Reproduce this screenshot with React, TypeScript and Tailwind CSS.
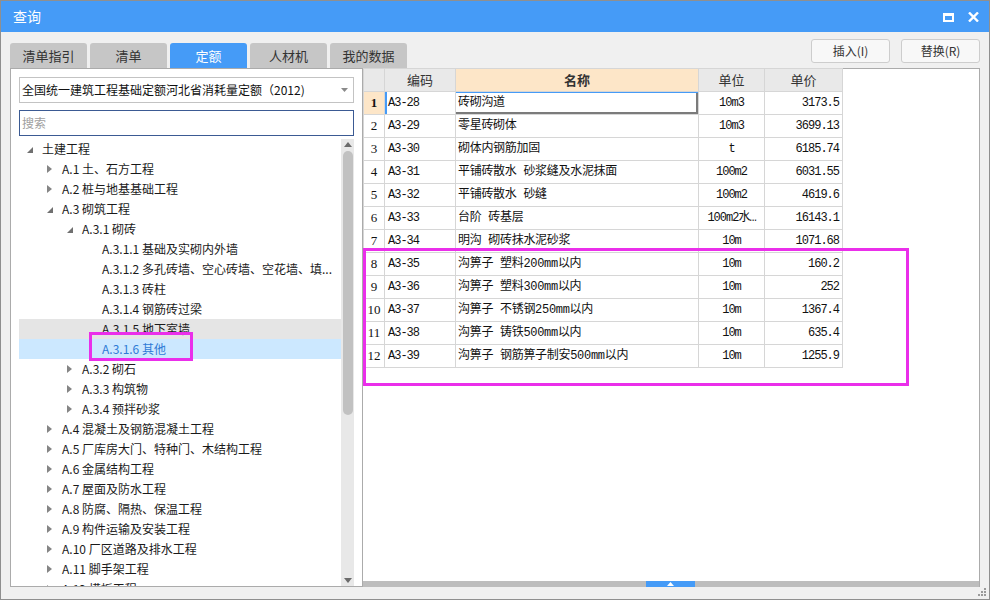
import React from 'react'

type Node = { label: string; level: number; state: 'open' | 'closed' | 'leaf'; mode?: 'hover' | 'selected' }

const tree: Node[] = [
  { label: '土建工程', level: 0, state: 'open' },
  { label: 'A.1 土、石方工程', level: 1, state: 'closed' },
  { label: 'A.2 桩与地基基础工程', level: 1, state: 'closed' },
  { label: 'A.3 砌筑工程', level: 1, state: 'open' },
  { label: 'A.3.1 砌砖', level: 2, state: 'open' },
  { label: 'A.3.1.1 基础及实砌内外墙', level: 3, state: 'leaf' },
  { label: 'A.3.1.2 多孔砖墙、空心砖墙、空花墙、填...', level: 3, state: 'leaf' },
  { label: 'A.3.1.3 砖柱', level: 3, state: 'leaf' },
  { label: 'A.3.1.4 钢筋砖过梁', level: 3, state: 'leaf' },
  { label: 'A.3.1.5 地下室墙', level: 3, state: 'leaf', mode: 'hover' },
  { label: 'A.3.1.6 其他', level: 3, state: 'leaf', mode: 'selected' },
  { label: 'A.3.2 砌石', level: 2, state: 'closed' },
  { label: 'A.3.3 构筑物', level: 2, state: 'closed' },
  { label: 'A.3.4 预拌砂浆', level: 2, state: 'closed' },
  { label: 'A.4 混凝土及钢筋混凝土工程', level: 1, state: 'closed' },
  { label: 'A.5 厂库房大门、特种门、木结构工程', level: 1, state: 'closed' },
  { label: 'A.6 金属结构工程', level: 1, state: 'closed' },
  { label: 'A.7 屋面及防水工程', level: 1, state: 'closed' },
  { label: 'A.8 防腐、隔热、保温工程', level: 1, state: 'closed' },
  { label: 'A.9 构件运输及安装工程', level: 1, state: 'closed' },
  { label: 'A.10 厂区道路及排水工程', level: 1, state: 'closed' },
  { label: 'A.11 脚手架工程', level: 1, state: 'closed' },
  { label: 'A.12 模板工程', level: 1, state: 'closed' },
]

const rows = [
  ['A3-28', '砖砌沟道', '10m3', '3173.5'],
  ['A3-29', '零星砖砌体', '10m3', '3699.13'],
  ['A3-30', '砌体内钢筋加固', 't', '6185.74'],
  ['A3-31', '平铺砖散水 砂浆缝及水泥抹面', '100m2', '6031.55'],
  ['A3-32', '平铺砖散水 砂缝', '100m2', '4619.6'],
  ['A3-33', '台阶 砖基层', '100m2水…', '16143.1'],
  ['A3-34', '明沟 砌砖抹水泥砂浆', '10m', '1071.68'],
  ['A3-35', '沟箅子 塑料200mm以内', '10m', '160.2'],
  ['A3-36', '沟箅子 塑料300mm以内', '10m', '252'],
  ['A3-37', '沟箅子 不锈钢250mm以内', '10m', '1367.4'],
  ['A3-38', '沟箅子 铸铁500mm以内', '10m', '635.4'],
  ['A3-39', '沟箅子 钢筋箅子制安500mm以内', '10m', '1255.9'],
]

const tabs = ['清单指引', '清单', '定额', '人材机', '我的数据']

const levelPad = ['pl-[8px]', 'pl-[28px]', 'pl-[48px]', 'pl-[68px]']

function Caret({ state }: { state: Node['state'] }) {
  if (state === 'closed')
    return (
      <svg width="5" height="8" viewBox="0 0 5 8">
        <polygon points="0,0 5,4 0,8" fill="#858585" />
      </svg>
    )
  if (state === 'open')
    return (
      <svg width="6" height="6" viewBox="0 0 6 6" className="mt-[2px]">
        <polygon points="6,0 6,6 0,6" fill="#707070" />
      </svg>
    )
  return null
}

function TreeRow({ node }: { node: Node }) {
  const bg = node.mode === 'selected' ? 'bg-[#cce8ff]' : node.mode === 'hover' ? 'bg-[#e5e5e5]' : ''
  const color = node.mode === 'selected' ? 'text-[#2f7bd6]' : 'text-[#1a1a1a]'
  return (
    <div className={`h-[20px] flex items-center whitespace-nowrap ${levelPad[node.level]} ${bg}`}>
      <span className="w-[15px] flex items-center">
        <Caret state={node.state} />
      </span>
      <span className={`text-[12px] ${color}`}>{node.label}</span>
    </div>
  )
}

const cell = 'border border-[#d6d6d6] h-[23px] p-0'
const mono = "font-['Liberation_Mono','Noto_Sans_CJK_SC',monospace] text-[12px] tracking-[-1px]"

export default function App() {
  return (
    <div className="w-[990px] h-[600px] relative flex flex-col bg-[#f0f0f0] border border-[#8f8f8f] overflow-hidden font-['Noto_Sans_CJK_SC','Noto_Sans',sans-serif]">
      {/* title bar */}
      <div className="h-[31px] shrink-0 bg-[#459bf7] flex items-center justify-between pl-[12px] pr-[10px]">
        <span className="text-white text-[14px]">查询</span>
        <div className="flex items-center gap-[14px] mt-[1px]">
          <div className="w-[11px] h-[9px] border-2 border-t-[3px] border-white" />
          <svg width="11" height="10" viewBox="0 0 11 10">
            <path d="M1 0.5 L10 9.5 M10 0.5 L1 9.5" stroke="#fff" strokeWidth="2.4" />
          </svg>
        </div>
      </div>

      {/* tabs + buttons */}
      <div className="h-[36px] shrink-0 flex justify-between pl-[9px] pr-[9px]">
        <div className="flex items-end gap-[3px]">
          {tabs.map((t) => (
            <div
              key={t}
              className={`w-[77px] h-[25px] rounded-t-[3px] flex items-center justify-center text-[13px] ${
                t === '定额' ? 'bg-[#459bf7] text-white' : 'bg-[#c6c6c6] text-[#333]'
              }`}
            >
              {t}
            </div>
          ))}
        </div>
        <div className="flex items-start gap-[11px] pt-[7px]">
          {['插入(I)', '替换(R)'].map((b) => (
            <div
              key={b}
              className="w-[79px] h-[24px] rounded-[3px] border border-[#cdcdcd] bg-[#f8f8f8] flex items-center justify-center text-[12px] text-[#333]"
            >
              {b}
            </div>
          ))}
        </div>
      </div>

      {/* main */}
      <div className="h-[519px] shrink-0 flex pl-[9px] pr-[9px]">
        {/* left panel */}
        <div className="w-[353px] h-full bg-white border border-[#ababab] flex flex-col px-[8px] pt-[8px]">
          <div className="h-[26px] shrink-0 border border-[#c3c3c3] flex items-center justify-between pl-[2px] pr-[5px]">
            <span className="text-[12px] text-[#111] whitespace-nowrap">全国统一建筑工程基础定额河北省消耗量定额（2012)</span>
            <svg width="7" height="4" viewBox="0 0 7 4">
              <polygon points="0,0 7,0 3.5,4" fill="#8a8a8a" />
            </svg>
          </div>
          <div className="h-[26px] shrink-0 mt-[7px] border border-[#3b5a93] flex items-center pl-[2px]">
            <span className="text-[12px] text-[#a0a0a0]">搜索</span>
          </div>
          <div className="flex-1 min-h-0 mt-[3px] flex overflow-hidden">
            <div className="flex-1 min-w-0 overflow-hidden">
              {tree.map((n) => (
                <TreeRow key={n.label} node={n} />
              ))}
            </div>
            <div className="w-[13px] h-full bg-[#e8e8e8] flex flex-col items-center pt-[3px] pb-[3px]">
              <svg width="8" height="5" viewBox="0 0 8 5">
                <polygon points="0,5 8,5 4,0" fill="#6b6b6b" />
              </svg>
              <div className="w-[10px] h-[264px] mt-[4px] rounded-full bg-[#c1c1c1]" />
              <div className="flex-1" />
              <svg width="8" height="5" viewBox="0 0 8 5">
                <polygon points="0,0 8,0 4,5" fill="#6b6b6b" />
              </svg>
            </div>
          </div>
        </div>

        {/* right panel */}
        <div className="flex-1 h-full flex flex-col border-t border-r border-[#ababab]">
          <div className="flex-1 bg-white">
            <table className="table-fixed border-collapse text-[#111] -mt-px">
              <colgroup>
                <col className="w-[21px]" />
                <col className="w-[71px]" />
                <col className="w-[243px]" />
                <col className="w-[66px]" />
                <col className="w-[78px]" />
              </colgroup>
              <thead>
                <tr>
                  <th className={`${cell} bg-[#e9e9e9]`} />
                  <th className={`${cell} bg-[#e9e9e9] text-[13px] font-normal text-[#333]`}>编码</th>
                  <th className={`${cell} bg-[#fde6c8] text-[13px] font-bold text-[#333]`}>名称</th>
                  <th className={`${cell} bg-[#e9e9e9] text-[13px] font-normal text-[#333]`}>单位</th>
                  <th className={`${cell} bg-[#e9e9e9] text-[13px] font-normal text-[#333]`}>单价</th>
                </tr>
              </thead>
              <tbody>
                {rows.map((r, i) => {
                  const first = i === 0
                  return (
                    <tr key={r[0]}>
                      <td
                        className={`${cell} text-center font-['Liberation_Serif',serif] text-[13px] ${
                          first ? 'bg-[#fde6c8] font-bold' : 'bg-white'
                        }`}
                      >
                        {i + 1}
                      </td>
                      <td className={`${cell} pl-[3px] ${mono} ${first ? 'shadow-[inset_2px_0_0_#459bf7]' : ''}`}>{r[0]}</td>
                      <td
                        className={`${cell} pl-[2px] text-[12px] whitespace-nowrap font-['Liberation_Mono','Noto_Sans_CJK_SC',monospace] tracking-[-0.3px] ${
                          first ? 'shadow-[inset_0_1px_0_#459bf7,inset_-2px_-2px_0_#7b7b7b]' : ''
                        }`}
                      >
                        {r[1]}
                      </td>
                      <td className={`${cell} text-center whitespace-nowrap ${mono}`}>{r[2]}</td>
                      <td className={`${cell} text-right pr-[3px] ${mono}`}>{r[3]}</td>
                    </tr>
                  )
                })}
              </tbody>
            </table>
          </div>
          <div className="h-[6px] shrink-0 bg-[#bdbdbd] flex">
            <div className="ml-[283px] w-[49px] h-full bg-[#459bf7] flex items-center justify-center">
              <svg width="7" height="4" viewBox="0 0 7 4">
                <polygon points="0,4 7,4 3.5,0" fill="#fff" />
              </svg>
            </div>
          </div>
        </div>
      </div>

      {/* resize grip */}
      <svg className="absolute right-[2px] bottom-[2px]" width="10" height="10" viewBox="0 0 10 10">
        <rect x="7" y="1" width="2" height="2" fill="#9a9a9a" />
        <rect x="4" y="4" width="2" height="2" fill="#9a9a9a" />
        <rect x="7" y="4" width="2" height="2" fill="#9a9a9a" />
        <rect x="1" y="7" width="2" height="2" fill="#9a9a9a" />
        <rect x="4" y="7" width="2" height="2" fill="#9a9a9a" />
        <rect x="7" y="7" width="2" height="2" fill="#9a9a9a" />
      </svg>

      {/* annotation boxes */}
      <div className="absolute left-[88px] top-[331px] w-[104px] h-[29px] border-[3px] border-[#ea2fea]" />
      <div className="absolute left-[362px] top-[247px] w-[546px] h-[138px] border-[3px] border-[#ea2fea]" />
    </div>
  )
}
